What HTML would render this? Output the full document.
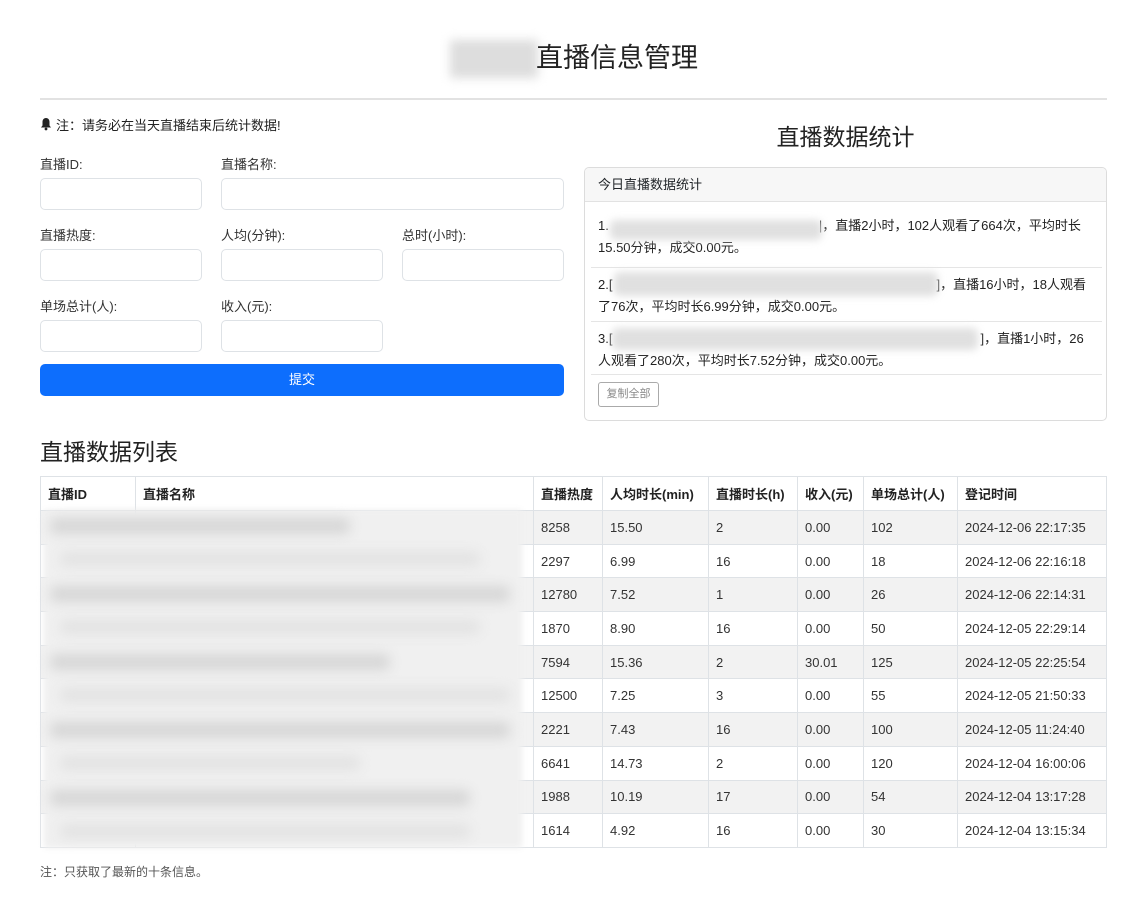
<!DOCTYPE html>
<html><head><meta charset="utf-8"><style>
*{box-sizing:border-box;margin:0;padding:0}
body{width:1144px;height:899px;background:#fff;font-family:"Liberation Sans","Noto Sans CJK SC",sans-serif;color:#212529;position:relative;overflow:hidden;font-size:13px}
.abs{position:absolute}
.blur{position:absolute;background:#d8d8d8;filter:blur(6px);border-radius:6px}
.lbl{position:absolute;font-size:13px;color:#333}
.inp{position:absolute;height:32px;border:1px solid #dee2e6;border-radius:5px;background:#fff}
table{position:absolute;left:40px;top:476px;width:1067px;border-collapse:collapse;font-size:13px}
td,th{border:1px solid #dee2e6;height:33.7px;padding:0 7px;text-align:left;white-space:nowrap}
th{font-weight:bold;color:#222;height:34px}
tr.s td{background:#f2f2f2}
td{color:#333}
</style></head><body>
<div class="abs" style="left:450px;top:40px;width:88px;height:38px;background:#ddd;filter:blur(5px)"></div>
<div class="abs" style="left:536px;top:40px;font-size:27px;color:#222;line-height:36px">直播信息管理</div>
<div class="abs" style="left:40px;top:98px;width:1067px;height:2px;background:#e2e2e2"></div>

<svg class="abs" style="left:40px;top:117px" width="12" height="14" viewBox="0 0 12 14"><path d="M6 1C3.6 1 2.5 3 2.5 5v3.5L1 10.5h10L9.5 8.5V5C9.5 3 8.4 1 6 1z" fill="#222"/><circle cx="6" cy="12" r="1.4" fill="#222"/></svg>
<div class="abs" style="left:56px;top:115px;font-size:13px;color:#222">注：请务必在当天直播结束后统计数据!</div>

<div class="lbl" style="left:40px;top:154px">直播ID:</div>
<div class="lbl" style="left:221px;top:154px">直播名称:</div>
<div class="inp" style="left:40px;top:178px;width:162px"></div>
<div class="inp" style="left:221px;top:178px;width:343px"></div>
<div class="lbl" style="left:40px;top:225px">直播热度:</div>
<div class="lbl" style="left:221px;top:225px">人均(分钟):</div>
<div class="lbl" style="left:402px;top:225px">总时(小时):</div>
<div class="inp" style="left:40px;top:249px;width:162px"></div>
<div class="inp" style="left:221px;top:249px;width:162px"></div>
<div class="inp" style="left:402px;top:249px;width:162px"></div>
<div class="lbl" style="left:40px;top:296px">单场总计(人):</div>
<div class="lbl" style="left:221px;top:296px">收入(元):</div>
<div class="inp" style="left:40px;top:320px;width:162px"></div>
<div class="inp" style="left:221px;top:320px;width:162px"></div>
<div class="abs" style="left:40px;top:364px;width:524px;height:32px;background:#0d6efd;border-radius:5px;color:#fff;text-align:center;line-height:32px;font-size:13px">提交</div>

<div class="abs" style="left:584px;top:118px;width:523px;text-align:center;font-size:23px;color:#222">直播数据统计</div>
<div class="abs" style="left:584px;top:167px;width:523px;height:254px;border:1px solid #dcdcdc;border-radius:5px;overflow:hidden">
 <div style="height:34px;background:#f7f7f7;border-bottom:1px solid #e2e2e2;padding-left:13px;line-height:34px;font-size:13px">今日直播数据统计</div>
 <div style="position:absolute;left:13px;top:47px;width:495px;font-size:13px;line-height:22px;color:#222">1.<span style="display:inline-block;width:210px"></span>|，直播2小时，102人观看了664次，平均时长15.50分钟，成交0.00元。</div>
 <div style="position:absolute;left:6px;top:99px;width:511px;height:1px;background:#e5e5e5"></div>
 <div style="position:absolute;left:13px;top:106px;width:490px;font-size:13px;line-height:22px;color:#222">2.[<span style="display:inline-block;width:324px"></span>]，直播16小时，18人观看了76次，平均时长6.99分钟，成交0.00元。</div>
 <div style="position:absolute;left:6px;top:153px;width:511px;height:1px;background:#e5e5e5"></div>
 <div style="position:absolute;left:13px;top:160px;width:492px;font-size:13px;line-height:22px;color:#222">3.[<span style="display:inline-block;width:368px"></span>]，直播1小时，26人观看了280次，平均时长7.52分钟，成交0.00元。</div>
 <div style="position:absolute;left:6px;top:206px;width:511px;height:1px;background:#e5e5e5"></div>
 <div style="position:absolute;left:13px;top:214px;width:61px;height:25px;border:1px solid #aaa;border-radius:3px;font-size:11px;color:#888;text-align:center;line-height:23px">复制全部</div>
</div>
<div class="blur" style="left:610px;top:220px;width:212px;height:20px;filter:blur(4px);background:#e0e0e0"></div>
<div class="blur" style="left:614px;top:272px;width:324px;height:24px;filter:blur(4px);background:#e0e0e0"></div>
<div class="blur" style="left:612px;top:328px;width:366px;height:22px;filter:blur(4px);background:#e0e0e0"></div>

<div class="abs" style="left:40px;top:433px;font-size:23px;color:#222">直播数据列表</div>
<table>
<tr><th style="width:95px">直播ID</th><th style="width:398px">直播名称</th><th style="width:69px">直播热度</th><th style="width:106px">人均时长(min)</th><th style="width:89px">直播时长(h)</th><th style="width:66px">收入(元)</th><th style="width:94px">单场总计(人)</th><th>登记时间</th></tr>
<tr class="s"><td></td><td></td><td>8258</td><td>15.50</td><td>2</td><td>0.00</td><td>102</td><td>2024-12-06 22:17:35</td></tr>
<tr><td></td><td></td><td>2297</td><td>6.99</td><td>16</td><td>0.00</td><td>18</td><td>2024-12-06 22:16:18</td></tr>
<tr class="s"><td></td><td></td><td>12780</td><td>7.52</td><td>1</td><td>0.00</td><td>26</td><td>2024-12-06 22:14:31</td></tr>
<tr><td></td><td></td><td>1870</td><td>8.90</td><td>16</td><td>0.00</td><td>50</td><td>2024-12-05 22:29:14</td></tr>
<tr class="s"><td></td><td></td><td>7594</td><td>15.36</td><td>2</td><td>30.01</td><td>125</td><td>2024-12-05 22:25:54</td></tr>
<tr><td></td><td></td><td>12500</td><td>7.25</td><td>3</td><td>0.00</td><td>55</td><td>2024-12-05 21:50:33</td></tr>
<tr class="s"><td></td><td></td><td>2221</td><td>7.43</td><td>16</td><td>0.00</td><td>100</td><td>2024-12-05 11:24:40</td></tr>
<tr><td></td><td></td><td>6641</td><td>14.73</td><td>2</td><td>0.00</td><td>120</td><td>2024-12-04 16:00:06</td></tr>
<tr class="s"><td></td><td></td><td>1988</td><td>10.19</td><td>17</td><td>0.00</td><td>54</td><td>2024-12-04 13:17:28</td></tr>
<tr><td></td><td></td><td>1614</td><td>4.92</td><td>16</td><td>0.00</td><td>30</td><td>2024-12-04 13:15:34</td></tr>
</table>
<div class="abs" style="left:44px;top:510px;width:478px;height:338px;background:#f0f0f0;filter:blur(3px)"></div>
<div class="blur" style="left:50px;top:518px;width:300px;height:16px;background:#d6d6d6"></div>
<div class="blur" style="left:60px;top:552px;width:420px;height:14px;background:#e2e2e2"></div>
<div class="blur" style="left:50px;top:586px;width:460px;height:16px;background:#d6d6d6"></div>
<div class="blur" style="left:60px;top:620px;width:420px;height:14px;background:#e2e2e2"></div>
<div class="blur" style="left:50px;top:654px;width:340px;height:16px;background:#d6d6d6"></div>
<div class="blur" style="left:60px;top:688px;width:450px;height:14px;background:#e2e2e2"></div>
<div class="blur" style="left:50px;top:722px;width:460px;height:16px;background:#d6d6d6"></div>
<div class="blur" style="left:60px;top:756px;width:300px;height:14px;background:#e2e2e2"></div>
<div class="blur" style="left:50px;top:790px;width:420px;height:16px;background:#d6d6d6"></div>
<div class="blur" style="left:60px;top:824px;width:410px;height:14px;background:#e2e2e2"></div>

<div class="abs" style="left:40px;top:863px;font-size:12px;color:#555">注：只获取了最新的十条信息。</div>
</body></html>
